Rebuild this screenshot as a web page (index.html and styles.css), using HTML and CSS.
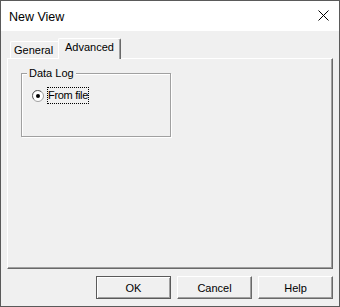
FILE: index.html
```html
<!DOCTYPE html>
<html lang="en">
<head>
  <meta charset="UTF-8">
  <title>New View</title>
  <link rel="stylesheet" href="styles.css">
</head>
<body>
  <div class="window">
    <div class="titlebar">
      <span class="title">New View</span>
      <svg class="close" width="11" height="11" viewBox="0 0 11 11">
        <path d="M0.5 0.5 L10.5 10.5 M10.5 0.5 L0.5 10.5" stroke="#000" stroke-width="1" fill="none"/>
      </svg>
    </div>

    <div class="content">
      <div class="tabs">
        <div class="tab">General</div>
        <div class="tab active">Advanced</div>
      </div>

      <div class="panel">
        <div class="group">
          <span class="legend">Data Log</span>
          <label class="radio">
            <svg class="radio-icon" width="12" height="12" viewBox="0 0 12 12">
              <circle cx="6" cy="6" r="5.5" fill="#fff" stroke="#a0a0a0"/>
              <path d="M1.9 9.2 A5 5 0 0 1 9.2 1.9" stroke="#696969" fill="none"/>
              <circle cx="6" cy="6" r="2" fill="#000"/>
            </svg>
            <span class="focus">From file</span>
          </label>
        </div>
      </div>

      <div class="buttons">
        <button class="btn default">OK</button>
        <button class="btn">Cancel</button>
        <button class="btn">Help</button>
      </div>
    </div>
  </div>
</body>
</html>
```

FILE: styles.css
```css
body { margin: 0; background: #f0f0f0; font-family: "Liberation Sans", Arial, sans-serif; color: #000; }

.window { width: 340px; height: 307px; box-sizing: border-box; border: 1px solid #5a5a5a; background: #f0f0f0; }

.titlebar { height: 30px; background: #fff; display: flex; align-items: center; justify-content: space-between; padding: 0 10px 0 8px; }
.title { font-size: 12.5px; padding-top: 1px; }
.close { display: block; margin-top: -1px; }

.content { font-size: 11px; }

.tabs { display: flex; align-items: flex-end; height: 20px; margin: 7px 0 0 9px; }
.tab { height: 16px; line-height: 16px; padding: 0 4px 0 3px; width: 40px; border-top: 1px solid #fff; border-left: 1px solid #fff; border-top-left-radius: 2px; }
.tab.active { position: relative; z-index: 1; height: 20px; line-height: 16px; width: 55px; padding: 0 0 0 6px; margin-bottom: -1px; border-right: 1px solid #696969; box-shadow: inset -1px 0 0 #a0a0a0; background: #f0f0f0; border-top-right-radius: 2px; }

.panel { margin-left: 6px; width: 326px; height: 211px; box-sizing: border-box; border-top: 1px solid #fff; border-left: 1px solid #fff; border-right: 1px solid #696969; border-bottom: 1px solid #696969; box-shadow: inset -1px -1px 0 #a0a0a0; padding: 14px 0 0 13px; }

.group { position: relative; width: 150px; height: 64px; box-sizing: border-box; border: 1px solid #a0a0a0; box-shadow: 1px 1px 0 #fff, inset 1px 1px 0 #fff; padding: 14px 0 0 10px; }
.legend { position: absolute; top: -7px; left: 5px; padding: 0 2px; background: #f0f0f0; line-height: 13px; }

.radio { display: flex; align-items: center; gap: 4px; }
.radio-icon { display: block; }
.focus { outline: 1px dotted #000; outline-offset: 0; padding: 1px 0; line-height: 13px; letter-spacing: -0.3px; }

.buttons { display: flex; justify-content: flex-end; gap: 6px; margin-top: 7px; padding-right: 6px; }
.btn { width: 75px; height: 23px; box-sizing: border-box; background: #f0f0f0; font-family: "Liberation Sans", Arial, sans-serif; font-size: 11px; color: #000; padding: 0; border-top: 1px solid #fff; border-left: 1px solid #fff; border-right: 1px solid #696969; border-bottom: 1px solid #696969; box-shadow: inset -1px -1px 0 #a0a0a0; }
.btn.default { border: 1px solid #5a5a5a; box-shadow: inset 1px 1px 0 #fff, inset -1px -1px 0 #a0a0a0; }
```
